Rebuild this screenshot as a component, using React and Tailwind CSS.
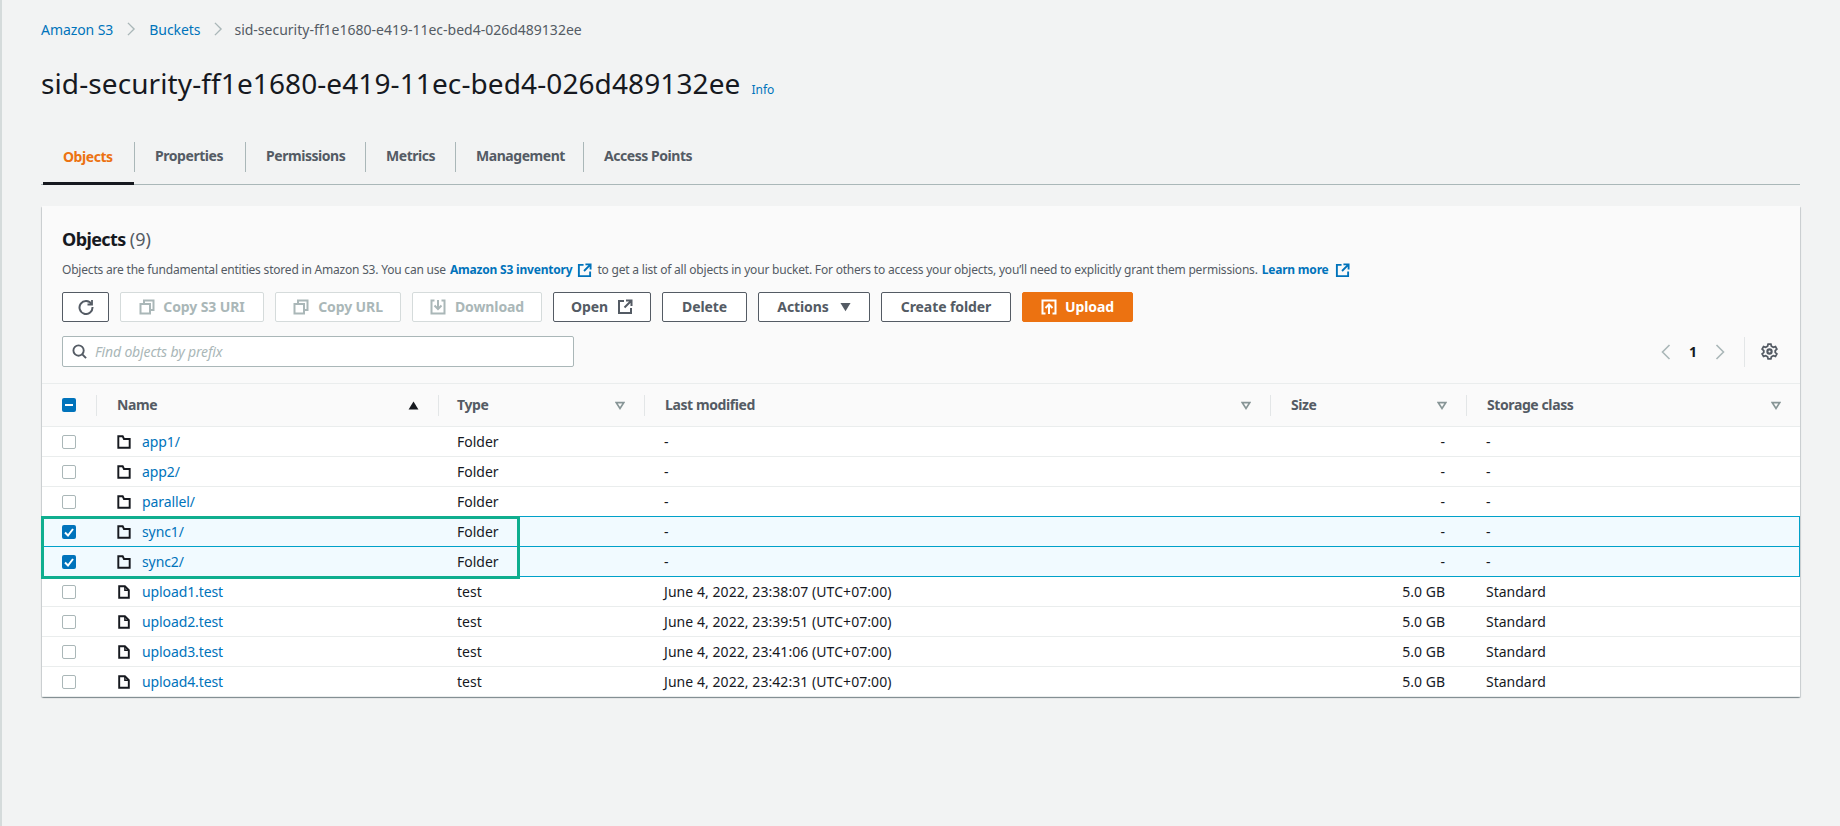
import React from "react";

const rows = [
  { name: "app1/", folder: true, type: "Folder", date: "-", size: "-", cls: "-" },
  { name: "app2/", folder: true, type: "Folder", date: "-", size: "-", cls: "-" },
  { name: "parallel/", folder: true, type: "Folder", date: "-", size: "-", cls: "-" },
  { name: "sync1/", folder: true, type: "Folder", date: "-", size: "-", cls: "-", selected: true },
  { name: "sync2/", folder: true, type: "Folder", date: "-", size: "-", cls: "-", selected: true },
  { name: "upload1.test", type: "test", date: "June 4, 2022, 23:38:07 (UTC+07:00)", size: "5.0 GB", cls: "Standard" },
  { name: "upload2.test", type: "test", date: "June 4, 2022, 23:39:51 (UTC+07:00)", size: "5.0 GB", cls: "Standard" },
  { name: "upload3.test", type: "test", date: "June 4, 2022, 23:41:06 (UTC+07:00)", size: "5.0 GB", cls: "Standard" },
  { name: "upload4.test", type: "test", date: "June 4, 2022, 23:42:31 (UTC+07:00)", size: "5.0 GB", cls: "Standard" },
];

const tabs = [
  { label: "Properties", width: "w-[111px]" },
  { label: "Permissions", width: "w-[120px]" },
  { label: "Metrics", width: "w-[90px]" },
  { label: "Management", width: "w-[128px]" },
  { label: "Access Points", width: "w-[130px]" },
];

function Icon({ className, children }) {
  return (
    <svg viewBox="0 0 16 16" fill="none" stroke="currentColor" strokeWidth="2" className={className}>
      {children}
    </svg>
  );
}

function ExternalIcon({ className }) {
  return (
    <Icon className={className}>
      <path d="M7 2H2v12h12V9" />
      <path d="M9 1.5h5.5V7M14.5 1.5L7.5 8.5" />
    </Icon>
  );
}

function CopyIcon() {
  return (
    <Icon className="w-[16px] h-[16px]">
      <path d="M5 5V1.5h9.5V11H11" />
      <path d="M1.5 5h9.5v9.5H1.5z" />
    </Icon>
  );
}

function Chevron({ left, className }) {
  return (
    <Icon className={className}>
      <path d={left ? "M11.5 1L4.5 8l7 7" : "M4.5 1l7 7-7 7"} strokeWidth="1.6" />
    </Icon>
  );
}

function FilterCaret({ className }) {
  return (
    <svg viewBox="0 0 12 10" className={"w-[10px] h-[9px] " + className}>
      <path d="M1.5 1.5h9L6 8.5z" fill="none" stroke="#879596" strokeWidth="2" />
    </svg>
  );
}

function Checkbox({ checked, partial }) {
  if (checked || partial) {
    return (
      <span className="flex items-center justify-center w-[14px] h-[14px] rounded-[2px] bg-[#0073bb]">
        <svg viewBox="0 0 14 14" className="w-[14px] h-[14px]" fill="none" stroke="#fff" strokeWidth="2">
          {partial ? <path d="M3 7h8" /> : <path d="M3 7.5l3 3 5-6.5" />}
        </svg>
      </span>
    );
  }
  return <span className="block w-[14px] h-[14px] rounded-[2px] border border-[#aab7b8] bg-white" />;
}

function Button({ width, disabled, primary, children }) {
  let tone = "border-[#545b64] text-[#545b64] bg-white";
  if (disabled) tone = "border-[#d5dbdb] text-[#aab7b8] bg-white";
  if (primary) tone = "border-[#ec7211] text-white bg-[#ec7211]";
  return (
    <button type="button" className={`flex items-center justify-center h-[30px] pb-px border rounded-[2px] text-[14px] font-bold tracking-[-0.1px] ${width} ${tone}`}>
      {children}
    </button>
  );
}

function HeaderCell({ label, width, labelMargin = "ml-5", children }) {
  return (
    <div className={`relative flex items-center h-full ${width}`}>
      <span className="w-px h-[21px] bg-[#e3e6e7]" />
      {label && <span className={`mb-px text-[14px] font-bold tracking-[-0.4px] text-[#545b64] ${labelMargin}`}>{label}</span>}
      {children}
    </div>
  );
}

function Row({ row, prevOfSelected }) {
  let border = "border-b border-b-[#eaeded]";
  if (row.selected) border = "border-b border-b-[#00a1c9] shadow-[inset_1px_0_0_#00a1c9,inset_-1px_0_0_#00a1c9] bg-[#f1faff]";
  else if (prevOfSelected) border = "border-b border-b-[#00a1c9]";
  return (
    <div className={`flex items-center h-[30px] text-[14px] text-[#16191f] ${border}`}>
      <div className="w-[54px] pl-5 shrink-0">
        <Checkbox checked={row.selected} />
      </div>
      <div className="flex items-center w-[342px] pl-[21px] shrink-0">
        {row.folder ? (
          <Icon className="w-[14px] h-[14px] text-[#16191f]">
            <path d="M1.5 14.5V1.5h5l1.5 3h6.5v10z" strokeWidth="2.2" />
          </Icon>
        ) : (
          <Icon className="w-[14px] h-[14px] text-[#16191f]">
            <path d="M2.5 1.5h6.5l4.5 4.5v8.5h-11z" strokeWidth="2.2" />
            <path d="M9 1.5V6h4.5" strokeWidth="1.6" />
          </Icon>
        )}
        <a className="ml-[11px] tracking-[-0.1px] text-[#0073bb]">{row.name}</a>
      </div>
      <div className="w-[206px] pl-[19px] shrink-0">{row.type}</div>
      <div className="w-[626px] pl-5 shrink-0 tracking-[0.06px]">{row.date}</div>
      <div className="w-[196px] pr-[21px] shrink-0 text-right">{row.size}</div>
      <div className="pl-5">{row.cls}</div>
    </div>
  );
}

export default function App() {
  return (
    <div className="min-h-[826px] bg-[#f2f3f3] border-l-2 border-l-[#d5dbdb] pl-[39px] pt-[19px] font-['Noto_Sans',sans-serif] text-[#16191f]">
      {/* breadcrumb */}
      <div className="flex items-center h-5 text-[14px]">
        <a className="tracking-[-0.07px] text-[#0073bb]">Amazon S3</a>
        <Chevron className="w-[14px] h-[14px] mx-[11px] text-[#aab7b8]" />
        <a className="tracking-[-0.07px] text-[#0073bb]">Buckets</a>
        <Chevron className="w-[14px] h-[14px] ml-[11px] mr-[9px] text-[#aab7b8]" />
        <span className="text-[#545b64]">sid-security-ff1e1680-e419-11ec-bed4-026d489132ee</span>
      </div>

      <div className="flex items-baseline mt-[26px]">
        <h1 className="text-[28px] leading-[36px] font-normal tracking-[0.1px]">sid-security-ff1e1680-e419-11ec-bed4-026d489132ee</h1>
        <a className="ml-[11px] text-[12px] text-[#0073bb]">Info</a>
      </div>

      {/* tabs */}
      <div className="flex items-center w-[1759px] h-[55px] mt-[29px] border-b border-b-[#aab7b8] text-[14px] font-bold tracking-[-0.45px]">
        <div className="relative flex items-center w-[93px] h-full pl-[22px] pb-[2px] text-[#ec7211]">
          Objects
          <span className="absolute left-[2px] right-0 bottom-[-1px] h-[3px] bg-[#16191f]" />
        </div>
        {tabs.map((t) => (
          <div key={t.label} className={`flex items-center h-[30px] pl-5 pb-[3px] border-l border-l-[#aab7b8] text-[#545b64] ${t.width}`}>
            {t.label}
          </div>
        ))}
      </div>

      {/* objects card */}
      <div className="ml-px mt-[21px] w-[1758px] rounded-[1px] bg-white shadow-[0_1px_1px_0_rgba(0,28,36,0.3),1px_1px_1px_0_rgba(0,28,36,0.15),-1px_1px_1px_0_rgba(0,28,36,0.15)]">
        <div className="bg-[#fafafa] pt-[21px] pb-4 pl-5 pr-[22px]">
          <h2 className="text-[18px] leading-[24px] font-bold tracking-[-0.6px]">
            Objects <span className="font-normal tracking-normal text-[#545b64]">(9)</span>
          </h2>
          <p className="flex items-center mt-[11px] text-[12px] leading-[16px] tracking-[-0.2px] text-[#545b64]">
            Objects are the fundamental entities stored in Amazon S3. You can use
            <a className="ml-1 font-bold text-[#0073bb]">Amazon S3 inventory</a>
            <ExternalIcon className="w-[15px] h-[15px] mx-[5px] text-[#0073bb]" />
            to get a list of all objects in your bucket. For others to access your objects, you&rsquo;ll need to explicitly grant them permissions.
            <a className="ml-1 font-bold text-[#0073bb]">Learn more</a>
            <ExternalIcon className="w-[15px] h-[15px] ml-[6px] text-[#0073bb]" />
          </p>

          <div className="flex gap-[11px] mt-[14px]">
            <Button width="w-[47px]">
              <Icon className="w-[16px] h-[16px]">
                <path d="M13.5 5A6.5 6.5 0 1 0 14.5 8" />
                <path d="M14 1v4.5H9.5" strokeWidth="1.8" />
              </Icon>
            </Button>
            <Button width="w-[144px]" disabled>
              <CopyIcon />
              <span className="ml-[8px]">Copy S3 URI</span>
            </Button>
            <Button width="w-[126px]" disabled>
              <CopyIcon />
              <span className="ml-[9px]">Copy URL</span>
            </Button>
            <Button width="w-[130px]" disabled>
              <Icon className="w-[16px] h-[16px]">
                <path d="M4.5 1.5h-3v13h13v-13h-3" />
                <path d="M8 1v8M4.5 6.5L8 10l3.5-3.5" />
              </Icon>
              <span className="ml-[9px]">Download</span>
            </Button>
            <Button width="w-[98px]">
              Open
              <ExternalIcon className="w-[16px] h-[16px] ml-[9px]" />
            </Button>
            <Button width="w-[85px]">Delete</Button>
            <Button width="w-[112px]">
              Actions
              <svg viewBox="0 0 12 10" className="w-[11px] h-[10px] ml-[11px]">
                <path d="M0.5 0.5h11L6 9.5z" fill="#545b64" />
              </svg>
            </Button>
            <Button width="w-[130px]">Create folder</Button>
            <Button width="w-[111px]" primary>
              <Icon className="w-[16px] h-[16px]">
                <path d="M4.5 14.5h-3v-13h13v13h-3" />
                <path d="M8 15V6.5M4.5 9L8 5.5 11.5 9" />
              </Icon>
              <span className="ml-[8px]">Upload</span>
            </Button>
          </div>

          <div className="flex items-center justify-between mt-[14px]">
            <div className="flex items-center w-[512px] h-[31px] pl-[9px] border border-[#aab7b8] rounded-[2px] bg-white">
              <Icon className="w-[15px] h-[15px] text-[#545b64]">
                <circle cx="7" cy="7" r="5.5" />
                <path d="M11 11l4 4" />
              </Icon>
              <span className="ml-[8px] text-[14px] italic tracking-[-0.15px] text-[#aab7b8]">Find objects by prefix</span>
            </div>
            <div className="flex items-center h-[30px]">
              <Chevron left className="w-[16px] h-[16px] text-[#aab7b8]" />
              <span className="mx-[15px] text-[14px] font-bold">1</span>
              <Chevron className="w-[16px] h-[16px] text-[#aab7b8]" />
              <span className="w-px h-full ml-[16px] mr-[16px] bg-[#e3e6e7]" />
              <Icon className="w-[17px] h-[17px] text-[#545b64]">
                <circle cx="8" cy="8" r="2" />
                <path d="M6.7 1h2.6l.5 2 1.8 1 2-.6 1.3 2.3-1.5 1.4v1.8l1.5 1.4-1.3 2.3-2-.6-1.8 1-.5 2H6.7l-.5-2-1.8-1-2 .6-1.3-2.3 1.5-1.4V7.1L1.1 5.7l1.3-2.3 2 .6 1.8-1z" strokeWidth="1.7" />
              </Icon>
            </div>
          </div>
        </div>

        {/* table header */}
        <div className="flex items-center h-[44px] bg-[#fafafa] border-y border-y-[#eaeded]">
          <div className="w-[54px] pl-5 shrink-0">
            <Checkbox partial />
          </div>
          <HeaderCell label="Name" width="w-[342px] shrink-0">
            <svg viewBox="0 0 12 10" className="absolute right-[19px] w-[11px] h-[9px]">
              <path d="M6 0.5l5.5 9H0.5z" fill="#16191f" />
            </svg>
          </HeaderCell>
          <HeaderCell label="Type" labelMargin="ml-[18px]" width="w-[206px] shrink-0">
            <FilterCaret className="absolute right-[19px]" />
          </HeaderCell>
          <HeaderCell label="Last modified" width="w-[626px] shrink-0">
            <FilterCaret className="absolute right-[19px]" />
          </HeaderCell>
          <HeaderCell label="Size" width="w-[196px] shrink-0">
            <FilterCaret className="absolute right-[19px]" />
          </HeaderCell>
          <HeaderCell label="Storage class" width="flex-1">
            <FilterCaret className="absolute right-[19px]" />
          </HeaderCell>
        </div>

        {/* rows */}
        <div className="relative">
          {rows.map((row, i) => (
            <Row key={row.name} row={row} prevOfSelected={i === 2} />
          ))}
          <div className="absolute left-[-1px] top-[89px] w-[479px] h-[63px] border-[3px] border-[#0fae8f] pointer-events-none" />
        </div>
      </div>
    </div>
  );
}
